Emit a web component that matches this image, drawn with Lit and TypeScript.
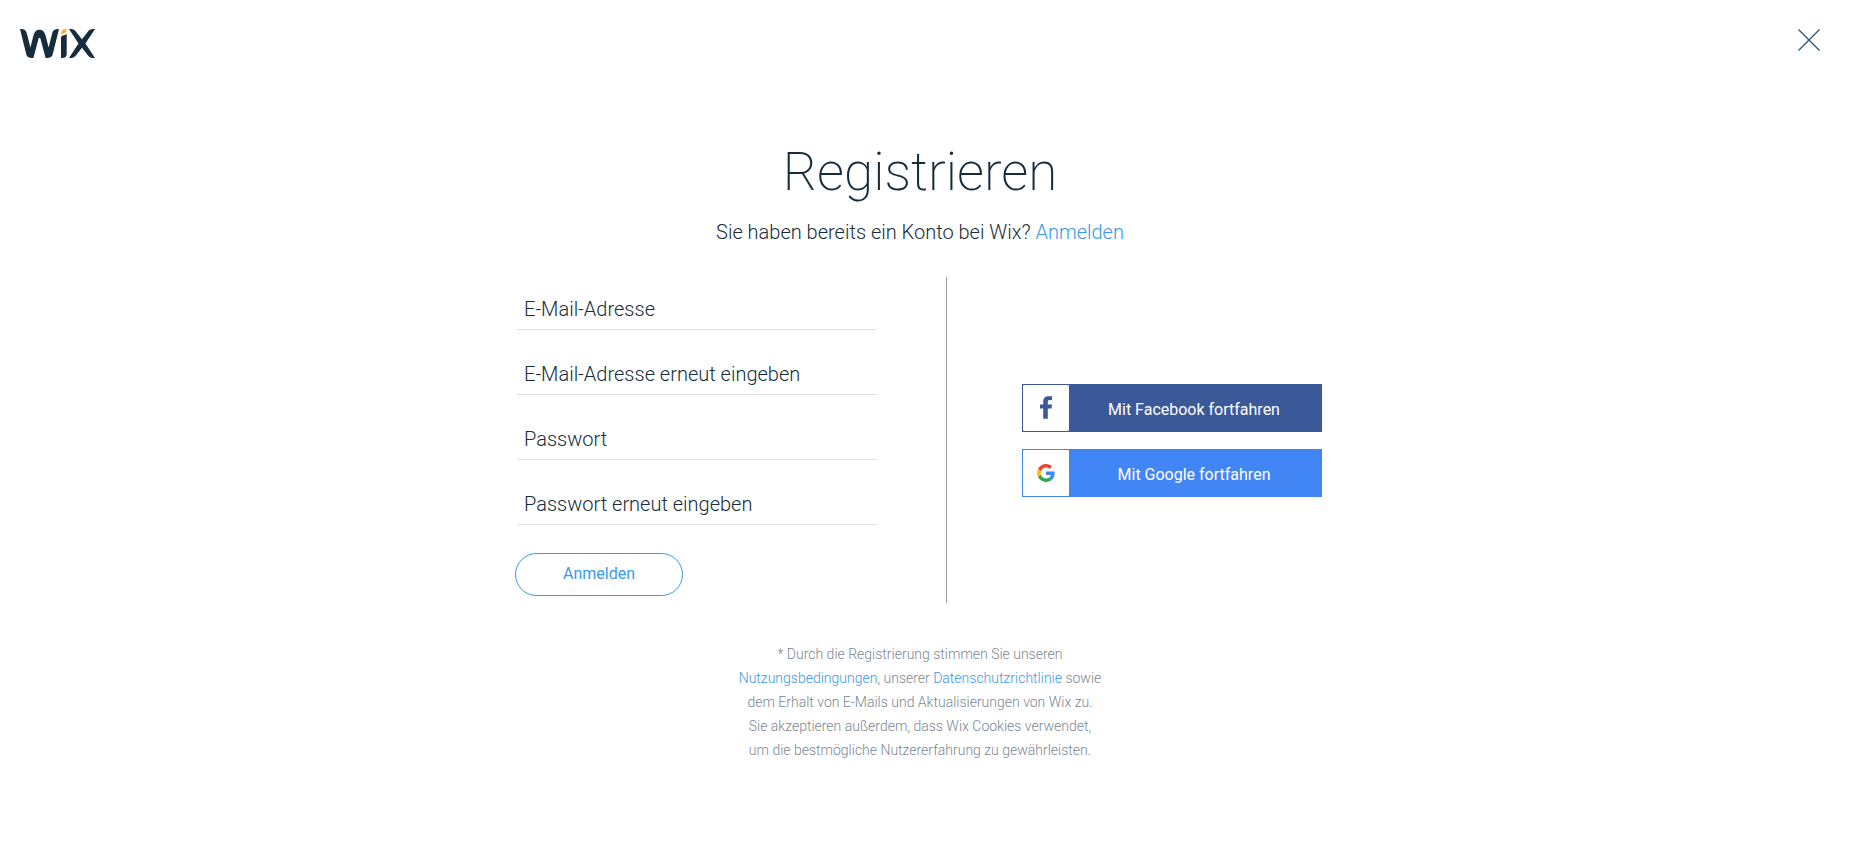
import { LitElement, html, css } from "lit";
import { customElement } from "lit/decorators.js";

const FIELDS = [
  { id: "email", type: "email", label: "E-Mail-Adresse" },
  { id: "email-repeat", type: "email", label: "E-Mail-Adresse erneut eingeben" },
  { id: "password", type: "password", label: "Passwort" },
  { id: "password-repeat", type: "password", label: "Passwort erneut eingeben" },
];

const wixLogo = html`
  <svg width="75" height="29" viewBox="0 0 75 29" aria-hidden="true">
    <path
      fill="#162d3d"
      d="M0 0 C4.400 0 6 1 7 5 L10.400 18.500 L13.300 7 C14.500 2.800 16.200 .8 19.500 .8 S24.500 2.800 25.700 7 L28.600 18.500 L32 5 C33 1 34.600 0 39 0 L32.800 25 C32 28 30.500 29 25.600 29 L20.400 9.500 C20 8.400 19 8.400 18.600 9.500 L13.400 29 C8.500 29 7 28 6.200 25 Z"
    />
    <path fill="#fbb03b" d="M46.700 0 C46.700 3 45.700 3.900 43.800 4.600 C42.400 5 41.300 5.200 41 5.800 C40.800 2 42.300 0 46.700 0 Z" />
    <path fill="#162d3d" d="M46.700 4.600 L46.700 24 C46.700 28 45.500 28.800 41 29 L41 9 C41 7 42.300 6.700 44 6.300 C45.300 5.900 46.300 5.600 46.700 4.600 Z" />
    <path
      fill="#162d3d"
      d="M49 0 C52.800 0 54.400 .4 56.200 3 L62 10.200 L67.600 3 C69.400 .4 71 0 75 0 L65.400 14.500 L75 29 C71 29 69.400 28.600 67.600 26 L62 18.800 L56.200 26 C54.400 28.600 52.800 29 49 29 L58.500 14.500 Z"
    />
  </svg>
`;

const closeIcon = html`
  <svg width="22" height="22" viewBox="0 0 22 22" aria-hidden="true">
    <path d="M.5 .5 L21.500 21.500 M21.500 .5 L.5 21.500" stroke="#2b5672" stroke-width="1.300" fill="none" />
  </svg>
`;

const facebookIcon = html`
  <svg width="12" height="23" viewBox="0 0 12 23" aria-hidden="true">
    <path
      fill="#3b5998"
      d="M3.200 22.800 V12.600 H0 V8.600 H3.200 V5.500 C3.200 2.100 5.200 .2 8.400 .2 H12 V4 H9.800 C8.100 4 7.800 4.800 7.800 6 V8.600 H12 L11.600 12.600 H7.800 V22.800 Z"
    />
  </svg>
`;

const googleIcon = html`
  <svg width="18" height="18" viewBox="0 0 48 48" aria-hidden="true">
    <path fill="#EA4335" d="M24 9.500c3.540 0 6.710 1.220 9.210 3.600l6.850-6.850C35.900 2.380 30.470 0 24 0 14.620 0 6.510 5.380 2.560 13.220l7.980 6.190C12.430 13.720 17.740 9.500 24 9.500z" />
    <path fill="#4285F4" d="M46.980 24.550c0-1.570-.15-3.090-.38-4.550H24v9.020h12.940c-.58 2.960-2.260 5.480-4.780 7.180l7.730 6c4.510-4.180 7.090-10.360 7.090-17.650z" />
    <path fill="#FBBC05" d="M10.530 28.590c-.48-1.450-.76-2.990-.76-4.590s.27-3.140.76-4.590l-7.980-6.190C.92 16.460 0 20.120 0 24c0 3.880.92 7.540 2.560 10.780l7.970-6.190z" />
    <path fill="#34A853" d="M24 48c6.480 0 11.930-2.130 15.890-5.810l-7.730-6c-2.150 1.450-4.920 2.300-8.160 2.300-6.260 0-11.570-4.220-13.470-9.910l-7.980 6.190C6.510 42.620 14.620 48 24 48z" />
  </svg>
`;

@customElement("app-root")
export class AppRoot extends LitElement {
  static styles = css`
    :host {
      display: block;
      min-height: 100vh;
      box-sizing: border-box;
      background: #fff;
      color: #162d3d;
      font-family: Roboto, "Liberation Sans", sans-serif;
      font-weight: 300;
    }
    a {
      color: #3899ec;
      text-decoration: none;
    }
    button {
      font: inherit;
      cursor: pointer;
    }
    svg {
      display: block;
    }
    .topbar {
      display: flex;
      justify-content: space-between;
      align-items: flex-start;
      padding: 29px 30px 0 20px;
    }
    .close {
      padding: 0;
      border: 0;
      background: none;
    }
    .page {
      display: flex;
      flex-direction: column;
      align-items: center;
      padding: 78px 10px 40px 0;
    }
    h1 {
      margin: 0;
      font-size: 53px;
      line-height: 72px;
      font-weight: 200;
    }
    .login {
      margin: 9px 0 0;
      font-size: 20px;
      line-height: 30px;
    }
    .columns {
      display: flex;
      box-sizing: border-box;
      width: 810px;
      max-width: 100%;
      margin-top: 30px;
      padding-right: 3px;
    }
    form {
      flex: 1;
      padding-bottom: 7px;
    }
    .field {
      display: grid;
      margin: 0 0 12px 2px;
      width: 360px;
      max-width: 100%;
      box-sizing: border-box;
      border-bottom: 1px solid #dfe1e3;
      font-size: 20px;
    }
    .field label,
    .field input {
      grid-area: 1 / 1;
      box-sizing: border-box;
      width: 100%;
      height: 52px;
      padding: 12px 7px 0;
    }
    .field label {
      line-height: 40px;
      cursor: text;
    }
    .field input {
      border: 0;
      outline: 0;
      background: none;
      color: inherit;
      font: inherit;
    }
    .field:focus-within label {
      opacity: 0;
    }
    .submit {
      display: block;
      box-sizing: border-box;
      width: 168px;
      height: 43px;
      margin-top: 28px;
      padding: 0 0 2px;
      border: 1px solid #3899ec;
      border-radius: 22px;
      background: #fff;
      color: #3899ec;
      font-size: 16px;
      font-weight: 400;
    }
    .divider {
      width: 1px;
      margin: 0 75px 0 69px;
      background: #9aa3aa;
    }
    .social {
      display: flex;
      flex-direction: column;
      justify-content: center;
      gap: 17px;
      width: 300px;
    }
    .provider {
      display: flex;
      align-items: stretch;
      height: 48px;
      padding: 0;
      border: 1px solid var(--brand);
      background: var(--brand);
      color: #fff;
      font-size: 16px;
      font-weight: 400;
    }
    .facebook {
      --brand: #3b5998;
    }
    .google {
      --brand: #4285f4;
    }
    .badge {
      display: grid;
      place-items: center;
      width: 46px;
      border-radius: 1px;
      background: #fff;
    }
    .caption {
      flex: 1;
      align-self: center;
      padding: 3px 2px 0 0;
    }
    .terms {
      max-width: 400px;
      margin: 39px 0 0;
      color: #7a8791;
      font-size: 14px;
      line-height: 24px;
      text-align: center;
    }
  `;

  render() {
    return html`
      <header class="topbar">
        <a href="#" aria-label="Wix">${wixLogo}</a>
        <button class="close" type="button" aria-label="Schließen">${closeIcon}</button>
      </header>
      <main class="page">
        <h1>Registrieren</h1>
        <p class="login">Sie haben bereits ein Konto bei Wix? <a href="#">Anmelden</a></p>
        <div class="columns">
          <form>
            ${FIELDS.map(
              (f) => html`
                <div class="field">
                  <label for=${f.id}>${f.label}</label>
                  <input id=${f.id} type=${f.type} />
                </div>
              `
            )}
            <button class="submit" type="button">Anmelden</button>
          </form>
          <div class="divider"></div>
          <div class="social">
            <button class="provider facebook" type="button">
              <span class="badge">${facebookIcon}</span>
              <span class="caption">Mit Facebook fortfahren</span>
            </button>
            <button class="provider google" type="button">
              <span class="badge">${googleIcon}</span>
              <span class="caption">Mit Google fortfahren</span>
            </button>
          </div>
        </div>
        <p class="terms">
          * Durch die Registrierung stimmen Sie unseren<br />
          <a href="#">Nutzungsbedingungen</a>, unserer <a href="#">Datenschutzrichtlinie</a> sowie<br />
          dem Erhalt von E-Mails und Aktualisierungen von Wix zu.<br />
          Sie akzeptieren außerdem, dass Wix Cookies verwendet,<br />
          um die bestmögliche Nutzererfahrung zu gewährleisten.
        </p>
      </main>
    `;
  }
}
